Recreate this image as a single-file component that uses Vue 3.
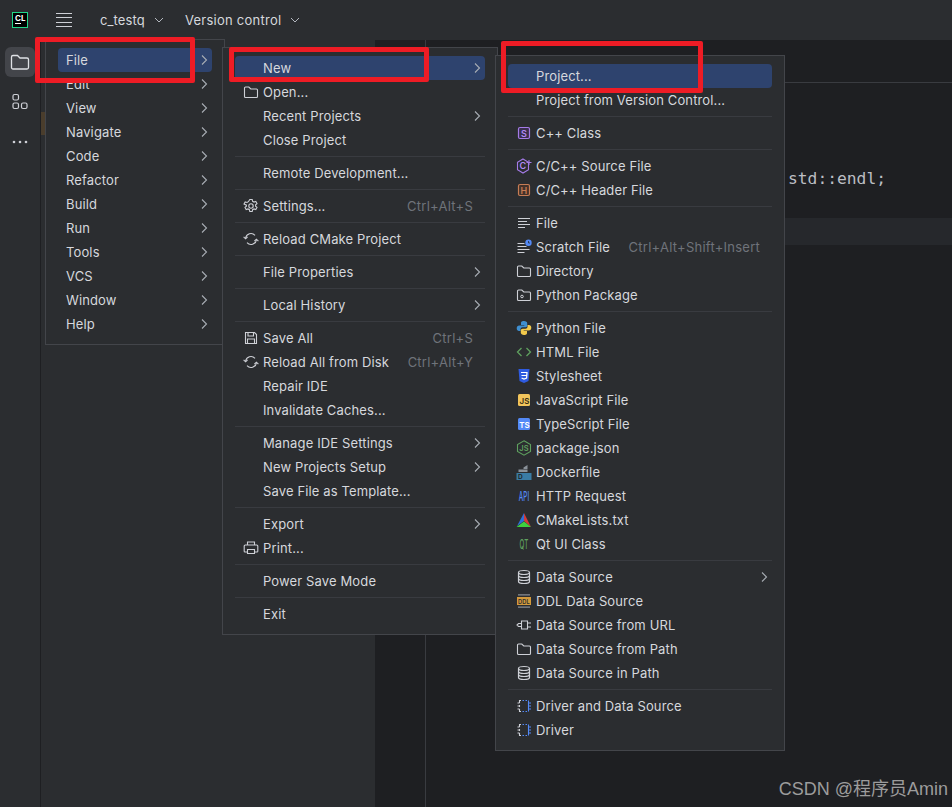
<script setup>
const S = 'fill="none" stroke="#ced0d6" stroke-width="1.1"'
const folder = `<path ${S} d="M1.500 4a1 1 0 0 1 1-1h3.300l2 2h5.700a1 1 0 0 1 1 1v6.500a1 1 0 0 1-1 1h-11a1 1 0 0 1-1-1z"/>`
const reloadI = `<g ${S}><path d="M2.600 7.200A5.400 5.400 0 0 1 12 4.400"/><path d="M13.400 8.800A5.400 5.400 0 0 1 4 11.600"/><path d="M.6 5.800 2.600 7.800 4.600 5.800"/><path d="M11.400 10.200 13.400 8.200 15.400 10.200"/></g>`
const dbI = `<g fill="none" stroke="#ced0d6" stroke-width="1.200"><ellipse cx="8" cy="3.500" rx="5.500" ry="2"/><path d="M2.500 3.500v9c0 1.100 2.500 2 5.500 2s5.500-.9 5.500-2v-9"/><path d="M2.500 6.500c0 1.100 2.500 2 5.500 2s5.500-.9 5.500-2"/><path d="M2.500 9.500c0 1.100 2.500 2 5.500 2s5.500-.9 5.500-2"/></g>`
const driverI = `<g fill="none" stroke-width="1.100"><path stroke="#ced0d6" d="M5 2.500H3.500V5M1.500 5h2M3.500 7v2M1.500 8h2M3.500 11v2.500H5M1.500 11h2"/><path stroke="#548af7" d="M6.500 2.500h1.500M9.500 2.500h1.500M6.500 13.500h1.500M9.500 13.500h1.500M12.500 2.500v11M12.500 5h2.500M12.500 8h2.500M12.500 11h2.500"/></g>`
const txt = (x, y, size, fill, t, extra = '') => `<text x="${x}" y="${y}" font-size="${size}" font-family="Inter, Liberation Sans, sans-serif" font-weight="600" text-anchor="middle" fill="${fill}" ${extra}>${t}</text>`
const narrow = (x, y, sx, size, fill, t) => `<g transform="translate(${x} ${y}) scale(${sx} 1)"><text x="0" y="0" font-size="${size}" font-family="Inter, Liberation Sans, sans-serif" font-weight="500" text-anchor="middle" fill="${fill}">${t}</text></g>`
const icons = {
  folder,
  reload: reloadI,
  gear: `<g ${S}><circle cx="8" cy="8" r="2.200"/><path d="M6.800 1.500h2.400l.4 1.800 1.400.8 1.800-.6 1.200 2.100-1.400 1.200v1.400l1.400 1.200-1.200 2.100-1.800-.6-1.400.8-.4 1.800H6.800l-.4-1.800-1.400-.8-1.800.6-1.200-2.100 1.400-1.200V7.200L1 6l1.200-2.100 1.800.6 1.400-.8z"/></g>`,
  save: `<g ${S}><path d="M2.500 2.500h9l2 2v9h-11z"/><path d="M5 2.500v3.500h5.500V2.500M4.500 13.500V9h7v4.500"/></g>`,
  print: `<g ${S}><path d="M4.500 5V2h7v3"/><path d="M4 12H2a.8.8 0 0 1-.8-.8V6a1 1 0 0 1 1-1h11.600a1 1 0 0 1 1 1v5.200a.8.8 0 0 1-.8.8h-2"/><path d="M4.500 9.500h7v4h-7z"/></g>`,
  cppclass: `<rect x="2.500" y="2.500" width="11" height="11" rx="1.500" fill="#3a2f4d" stroke="#a57be8" stroke-width="1.200"/>` + txt(8, 11.500, 9, '#b189f5', 'S'),
  csource: `<path d="M7 1 12.500 4.200v7.600L7 15 1.500 11.800V4.200z" fill="none" stroke="#a57be8" stroke-width="1.100"/>` + txt(7, 11.200, 9, '#b189f5', 'C') + `<path d="M13 2v5M10.500 4.500h5" stroke="#a57be8" stroke-width="1"/>`,
  cheader: `<rect x="2.500" y="2.500" width="11" height="11" rx="1.500" fill="#45322a" stroke="#c77d55" stroke-width="1.200"/>` + txt(8, 11.500, 9, '#c77d55', 'H'),
  lines: `<path stroke="#ced0d6" stroke-width="1" d="M2 3.500h12M2 6.500h9M2 9.500h12M2 12.500h7"/>`,
  scratch: `<path stroke="#ced0d6" stroke-width="1" d="M1.500 4.500h7M1.500 7.500h9M1.500 10.500h12M1.500 13.500h7"/><circle cx="12.500" cy="3.800" r="3.200" fill="#548af7"/><path d="M12.500 2v2h1.500" stroke="#1e1f22" stroke-width=".7" fill="none"/>`,
  pkg: folder + `<circle cx="6" cy="9.500" r="1.300" fill="none" stroke="#ced0d6"/>`,
  python: `<path fill="#3f8fd0" d="M8 1C5.200 1 5 2.200 5 3.300V5h3.300v.6H3.200C1.800 5.600.7 6.500.7 8.200s1 2.700 2.300 2.700h1.500V9.300c0-1.100 1-2 2.100-2h2.800c1 0 1.800-.8 1.800-1.800V3.200C11.200 2 10 1 8 1z"/><path fill="#f2c94c" d="M8 15c2.800 0 3-1.200 3-2.300V11H7.700v-.6h5.100c1.400 0 2.500-.9 2.500-2.600s-1-2.700-2.300-2.700h-1.500v1.600c0 1.100-1 2-2.100 2H6.600c-1 0-1.800.8-1.800 1.800v2.300C4.800 14 6 15 8 15z"/>`,
  html: `<path fill="none" stroke="#5fa05f" stroke-width="1.300" d="M5.500 4 1.500 8l4 4M10.500 4l4 4-4 4"/>`,
  css: `<path fill="#2f5be0" d="M2.500 1h11l-1 12L8 15l-4.500-2z"/><path fill="none" stroke="#fff" stroke-width="1.200" d="M5 4.500h6l-.4 5.500L8 11l-2.400-1M5.500 7.500h5"/>`,
  js: `<rect x="2" y="2" width="12" height="12" rx="1.500" fill="#f2c55c"/>` + txt(8.500, 12, 8, '#3a2f12', 'JS'),
  ts: `<rect x="2" y="2" width="12" height="12" rx="1.500" fill="#548af7"/>` + txt(8.500, 12, 8, '#fff', 'TS'),
  node: `<path d="M8 .8 14.500 4.500v7L8 15.200l-6.500-3.700v-7z" fill="none" stroke="#5fa05f" stroke-width="1.100"/>` + txt(8, 11, 7.500, '#5fa05f', 'JS'),
  docker: `<path fill="#8a9199" d="M7.500 3.500 11.500 1v4H7.500zM2.500 5.500h9v2.500h-9z"/><path fill="#3a7ca5" d="M.5 9h15v7H.5z"/>` + txt(4.500, 15, 6.500, '#1e1f22', 'D'),
  api: narrow(8, 12.500, 0.5, 12.500, '#548af7', 'API'),
  cmake: `<path fill="#2f6fd8" d="M8 1 1 14l7-5z"/><path fill="#d13b3b" d="M8 1l7 14L8 9z"/><path fill="#3fd03f" d="M.5 15 8 9.500l7 5.500z"/>`,
  qt: narrow(8, 13, 0.48, 13, '#5fa05f', 'QT'),
  db: dbI,
  ddl: `<path stroke="#8a8d93" stroke-width="1.200" d="M2 1.800h12M2 14.200h12"/><rect x="1" y="4" width="14" height="8" fill="#d49a3c"/>` + txt(8, 10.500, 6.200, '#2b2d30', 'DDL', 'textLength="12" lengthAdjust="spacingAndGlyphs"'),
  url: `<g ${S}><path d="M5.500 4h6v8h-6zM5.500 6.500H2.500L1 8l1.500 1.500h3M11.500 6H15M11.500 10H15"/></g>`,
  driver: driverI
}

const item = (t, o = {}) => ({ t, ...o })
const sub = { arrow: true }
const menus = [
  {
    name: 'm1',
    entries: ['File', 'Edit', 'View', 'Navigate', 'Code', 'Refactor', 'Build', 'Run', 'Tools', 'VCS', 'Window', 'Help'].map((t, i) =>
      item(t, { arrow: true, active: i === 0 }))
  },
  {
    name: 'm2', iconSlot: true,
    entries: [
      item('New', { arrow: true, active: true }), item('Open...', { icon: 'folder' }), item('Recent Projects', sub), item('Close Project'), null,
      item('Remote Development...'), null,
      item('Settings...', { icon: 'gear', key: 'Ctrl+Alt+S' }), null,
      item('Reload CMake Project', { icon: 'reload' }), null,
      item('File Properties', sub), null,
      item('Local History', sub), null,
      item('Save All', { icon: 'save', key: 'Ctrl+S' }), item('Reload All from Disk', { icon: 'reload', key: 'Ctrl+Alt+Y' }), item('Repair IDE'), item('Invalidate Caches...'), null,
      item('Manage IDE Settings', sub), item('New Projects Setup', sub), item('Save File as Template...'), null,
      item('Export', sub), item('Print...', { icon: 'print' }), null,
      item('Power Save Mode'), null,
      item('Exit')
    ]
  },
  {
    name: 'm3', iconSlot: true,
    entries: [
      item('Project...', { active: true }), item('Project from Version Control...'), null,
      item('C++ Class', { icon: 'cppclass' }), null,
      item('C/C++ Source File', { icon: 'csource' }), item('C/C++ Header File', { icon: 'cheader' }), null,
      item('File', { icon: 'lines' }), item('Scratch File', { icon: 'scratch', key: 'Ctrl+Alt+Shift+Insert' }), item('Directory', { icon: 'folder' }), item('Python Package', { icon: 'pkg' }), null,
      item('Python File', { icon: 'python' }), item('HTML File', { icon: 'html' }), item('Stylesheet', { icon: 'css' }), item('JavaScript File', { icon: 'js' }), item('TypeScript File', { icon: 'ts' }), item('package.json', { icon: 'node' }), item('Dockerfile', { icon: 'docker' }), item('HTTP Request', { icon: 'api' }), item('CMakeLists.txt', { icon: 'cmake' }), item('Qt UI Class', { icon: 'qt' }), null,
      item('Data Source', { icon: 'db', arrow: true }), item('DDL Data Source', { icon: 'ddl' }), item('Data Source from URL', { icon: 'url' }), item('Data Source from Path', { icon: 'folder' }), item('Data Source in Path', { icon: 'db' }), null,
      item('Driver and Data Source', { icon: 'driver' }), item('Driver', { icon: 'driver' })
    ]
  }
]
const marks = ['r1', 'r2', 'r3']
</script>

<template>
  <div class="app">
    <header class="topbar">
      <div class="logo">CL</div>
      <svg class="burger" width="16" height="16" viewBox="0 0 16 16">
        <path d="M0 1.500h16M0 5.500h16M0 10.500h16M0 14.500h16" stroke="#ced0d6" stroke-width="1" />
      </svg>
      <div class="widget project">c_testq
        <svg width="10" height="10" viewBox="0 0 10 10"><path d="M1 3l4 4 4-4" fill="none" stroke="#b4b8bf" /></svg>
      </div>
      <div class="widget vcs">Version control
        <svg width="10" height="10" viewBox="0 0 10 10"><path d="M1 3l4 4 4-4" fill="none" stroke="#b4b8bf" /></svg>
      </div>
    </header>

    <div class="body">
      <aside class="sidebar">
        <div class="tool active">
          <svg width="20" height="20" viewBox="0 0 20 20">
            <path d="M1.500 5a1.500 1.500 0 0 1 1.500-1.500h4.500l2.500 2.500h7a1.500 1.500 0 0 1 1.500 1.500v8a1.500 1.500 0 0 1-1.500 1.500H3a1.500 1.500 0 0 1-1.500-1.500z" fill="none" stroke="#dfe1e5" stroke-width="1.300" />
          </svg>
        </div>
        <div class="tool">
          <svg width="20" height="20" viewBox="0 0 20 20">
            <g fill="none" stroke="#ced0d6" stroke-width="1.200">
              <rect x="3" y="2.500" width="5.500" height="5.500" rx="1.500" />
              <rect x="3" y="11" width="5.500" height="5.500" rx="1.500" />
              <rect x="11.500" y="11" width="5.500" height="5.500" rx="1.500" />
            </g>
          </svg>
        </div>
        <div class="tool">
          <svg width="20" height="20" viewBox="0 0 20 20">
            <circle cx="4" cy="10" r="1.300" fill="#ced0d6" />
            <circle cx="10" cy="10" r="1.300" fill="#ced0d6" />
            <circle cx="16" cy="10" r="1.300" fill="#ced0d6" />
          </svg>
        </div>
      </aside>
      <section class="panel"><div class="tree-mark"></div></section>
      <div class="gutter"></div>
      <main class="editor">
        <div class="tabs"></div>
        <div class="code">
          <div class="line">std::endl;</div>
          <div class="line"></div>
          <div class="line current"></div>
        </div>
      </main>
    </div>

    <nav v-for="m in menus" :key="m.name" class="menu" :class="m.name">
      <template v-for="(e, i) in m.entries" :key="i">
        <div v-if="!e" class="sep"></div>
        <div v-else class="row" :class="{ active: e.active }">
          <svg v-if="m.iconSlot && e.icon" class="ico" width="16" height="16" viewBox="0 0 16 16" v-html="icons[e.icon]"></svg>
          <span v-else-if="m.iconSlot" class="ico"></span>
          <span class="label">{{ e.t }}</span>
          <span v-if="e.key" class="key">{{ e.key }}</span>
          <svg v-if="e.arrow" class="chev" width="16" height="16" viewBox="0 0 16 16">
            <path d="M6 3.500 10.500 8 6 12.500" fill="none" stroke="#a8adb4" stroke-width="1.100" />
          </svg>
        </div>
      </template>
    </nav>

    <div v-for="r in marks" :key="r" class="mark" :class="r"></div>
    <div class="watermark">CSDN @程序员Amin</div>
  </div>
</template>

<style scoped>
.app {
  position: relative;
  width: 100vw;
  height: 100vh;
  overflow: hidden;
  display: flex;
  flex-direction: column;
  background: #1e1f22;
  color: #d6d8dd;
  font-family: Inter, "Liberation Sans", sans-serif;
  font-size: 13px;
  letter-spacing: .13px;
}
.topbar {
  height: 40px;
  flex: none;
  display: flex;
  align-items: center;
  background: #2b2d30;
}
.logo {
  position: relative;
  width: 16px;
  height: 16px;
  box-sizing: border-box;
  margin-left: 12px;
  padding-left: 2px;
  border: 1px solid #21d789;
  background: #000;
  color: #fff;
  font-size: 8px;
  font-weight: 700;
  line-height: 10px;
  letter-spacing: 0;
}
.logo::after {
  content: "";
  position: absolute;
  left: 2px;
  top: 10px;
  width: 6px;
  height: 1px;
  background: #fff;
}
.burger {
  margin-left: 28px;
}
.widget {
  display: flex;
  align-items: center;
  gap: 9px;
}
.project {
  margin-left: 28px;
}
.vcs {
  margin-left: 21px;
  letter-spacing: .25px;
}
.body {
  flex: 1;
  display: flex;
  min-height: 0;
}
.sidebar {
  width: 41px;
  flex: none;
  box-sizing: border-box;
  padding-top: 7px;
  display: flex;
  flex-direction: column;
  align-items: center;
  gap: 10px;
  background: #2b2d30;
  border-right: 1px solid #1e1f22;
}
.tool {
  width: 30px;
  height: 30px;
  border-radius: 6px;
  display: flex;
  align-items: center;
  justify-content: center;
}
.tool.active {
  background: #43454a;
}
.panel {
  position: relative;
  width: 334px;
  flex: none;
  background: #2b2d30;
}
.tree-mark {
  position: absolute;
  left: 0;
  top: 72px;
  width: 4px;
  height: 23px;
  background: #4a3d2c;
}
.gutter {
  width: 50px;
  flex: none;
  border-right: 1px solid #393b40;
}
.editor {
  flex: 1;
  min-width: 0;
}
.tabs {
  height: 43px;
  box-sizing: border-box;
  border-bottom: 1px solid #393b40;
}
.code {
  padding-top: 81px;
}
.line {
  height: 27px;
  padding-left: 362px;
  font-family: "DejaVu Sans Mono", monospace;
  font-size: 16.3px;
  line-height: 30px;
  letter-spacing: 0;
  color: #bcbec4;
}
.line.current {
  background: #26282c;
}
.menu {
  position: absolute;
  box-sizing: border-box;
  display: flex;
  flex-direction: column;
  padding: 8px 12px;
  background: #2b2d30;
  border: 1px solid #43454a;
}
.m1 {
  left: 45px;
  top: 39px;
  width: 180px;
}
.m2 {
  left: 222px;
  top: 47px;
  width: 276px;
}
.m3 {
  left: 495px;
  top: 55px;
  width: 290px;
}
.row {
  height: 24px;
  flex: none;
  display: flex;
  align-items: center;
  gap: 4px;
  padding: 0 12px 0 8px;
  border-radius: 4px;
  white-space: nowrap;
}
.row.active {
  background: #2e436e;
}
.ico {
  width: 16px;
  height: 16px;
  flex: none;
  overflow: visible;
}
.key {
  margin-left: auto;
  color: #6f737a;
  letter-spacing: .25px;
}
.chev {
  margin-left: auto;
  margin-right: -12px;
  flex: none;
}
.sep {
  height: 1px;
  flex: none;
  margin: 4px 0;
  background: #393b40;
}
.mark {
  position: absolute;
  box-sizing: border-box;
  border: 5px solid #ee1c25;
  border-radius: 2px;
}
.r1 {
  left: 35px;
  top: 37px;
  width: 160px;
  height: 46px;
}
.r2 {
  left: 229px;
  top: 47px;
  width: 200px;
  height: 35px;
}
.r3 {
  left: 501px;
  top: 41px;
  width: 202px;
  height: 52px;
}
.watermark {
  position: absolute;
  right: 4px;
  bottom: 7px;
  font-family: "Liberation Sans", "Noto Sans CJK SC", sans-serif;
  font-size: 18px;
  letter-spacing: 0;
  color: #9c9c9c;
  white-space: nowrap;
}
</style>
